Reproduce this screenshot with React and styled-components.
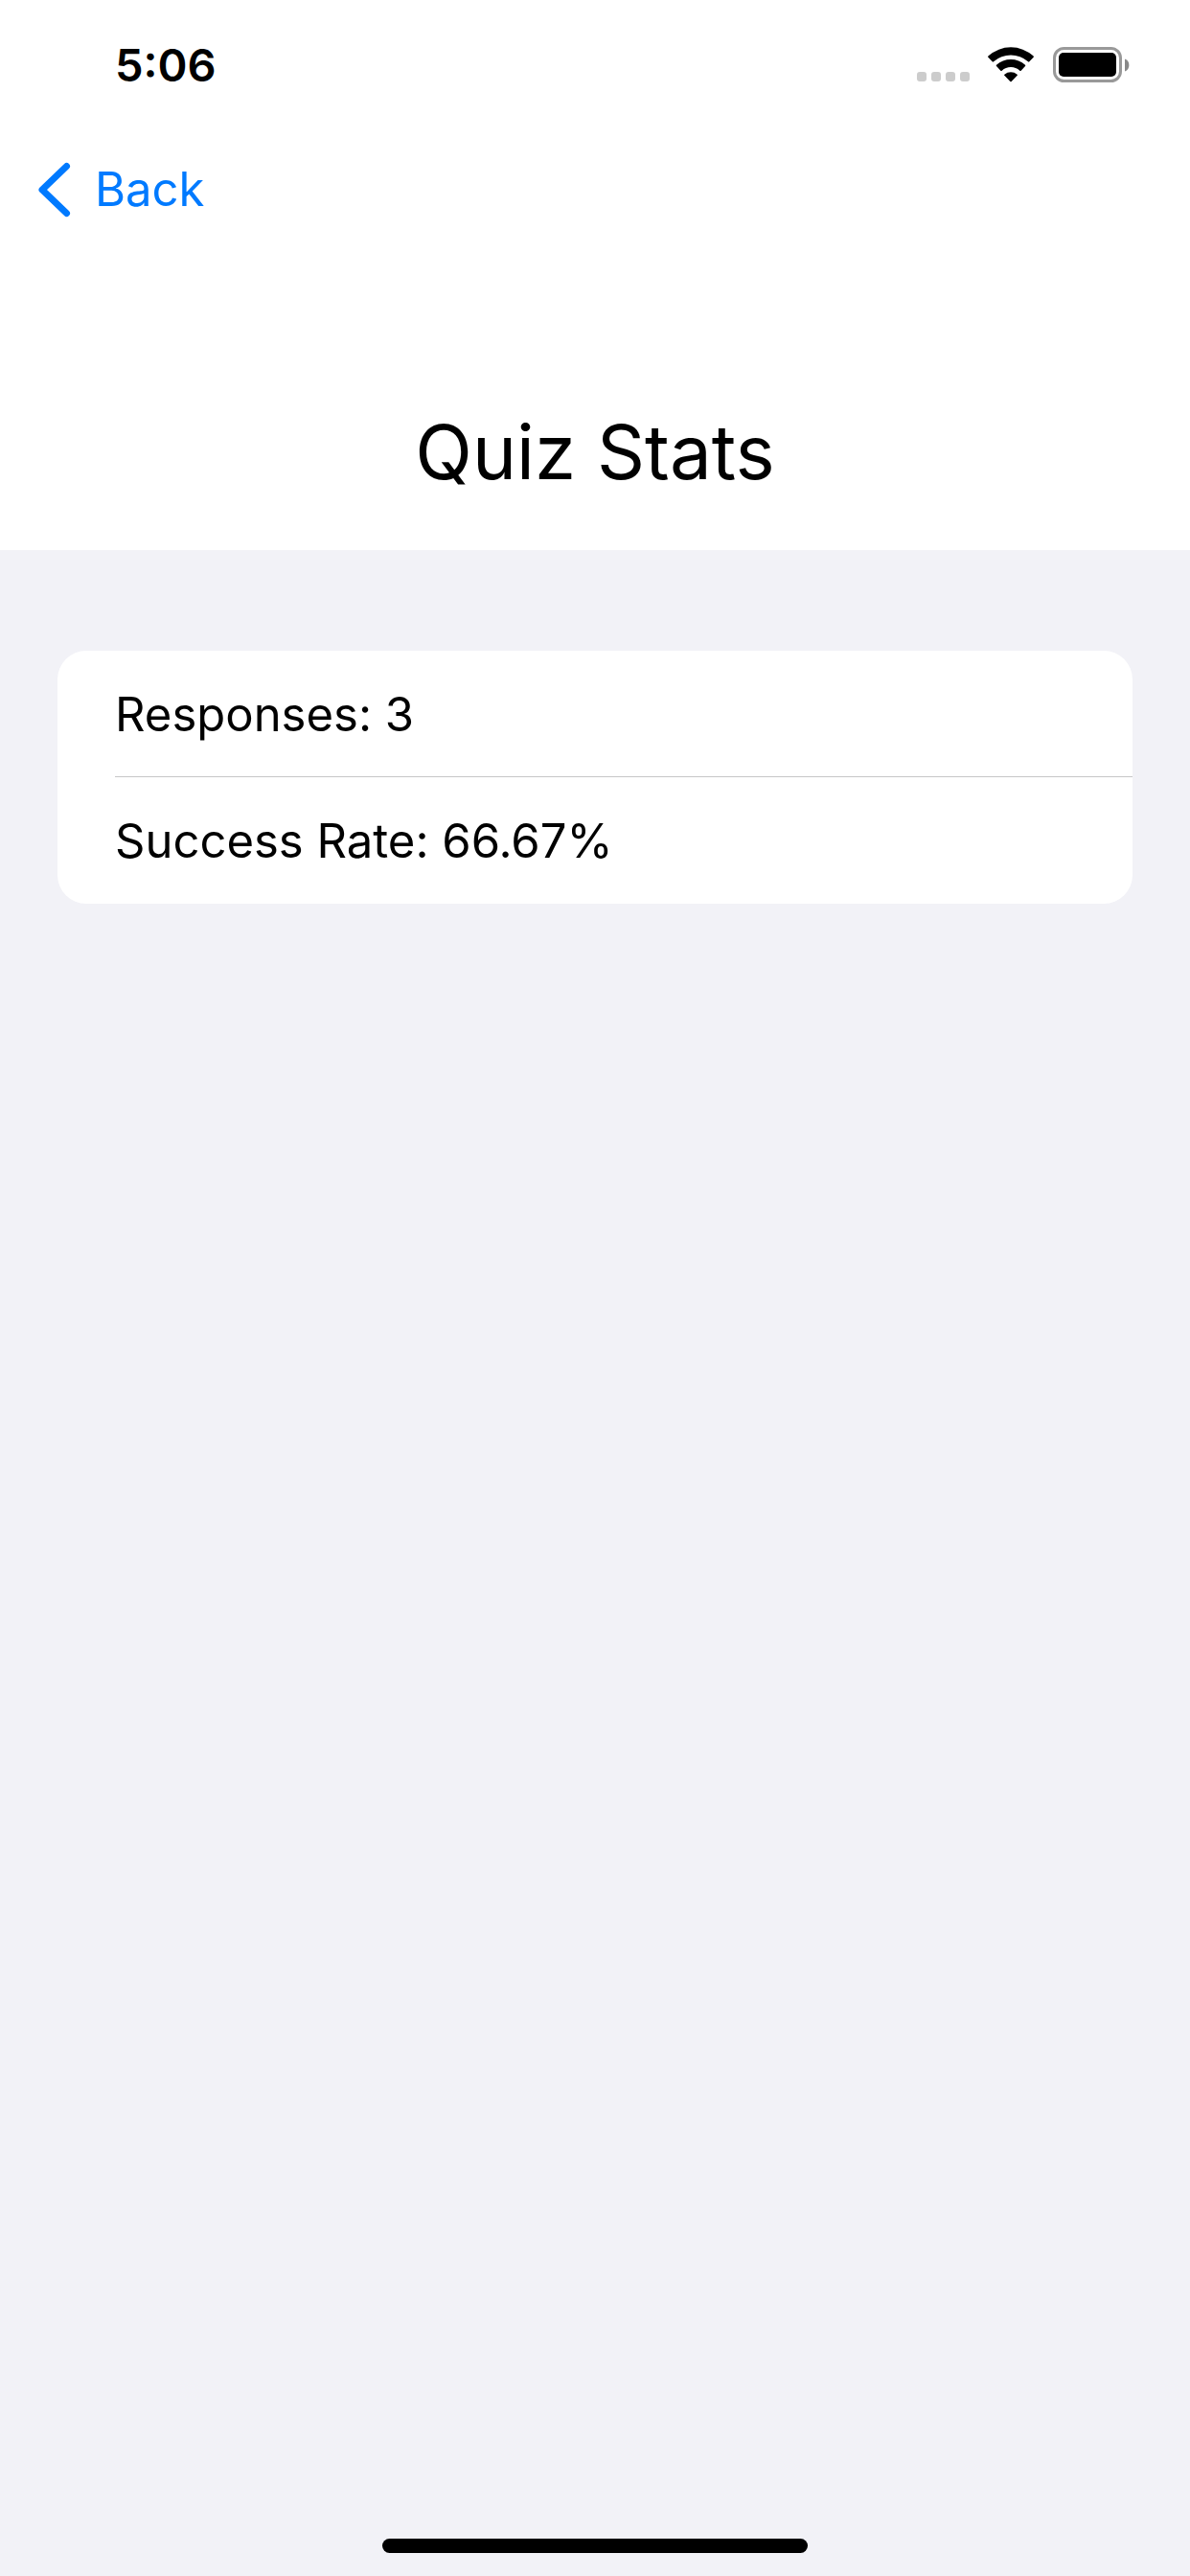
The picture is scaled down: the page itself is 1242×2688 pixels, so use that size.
import React from "react";
import styled, { createGlobalStyle } from "styled-components";

const GlobalStyle = createGlobalStyle`
  *, *::before, *::after { box-sizing: border-box; }
  body {
    margin: 0;
    background: #f2f2f7;
    color: #000;
    font-family: Inter, "Liberation Sans", sans-serif;
  }
`;

const Screen = styled.div`
  display: flex;
  flex-direction: column;
  min-height: 100vh;
  background: #f2f2f7;
`;

const Header = styled.header`
  background: #fff;
`;

const StatusBar = styled.div`
  display: flex;
  align-items: center;
  justify-content: space-between;
  height: 136px;
  padding: 0 63px 0 120px;
`;

const Time = styled.time`
  font-size: 47px;
  line-height: 60px;
  font-weight: 600;
`;

const StatusIcons = styled.div`
  display: flex;
  align-items: center;
`;

const SignalIcon = styled.svg`
  width: 56px;
  height: 38px;
  margin-right: 18px;
`;

const WifiIcon = styled.svg`
  width: 48px;
  height: 38px;
  margin-right: 20px;
`;

const BatteryIcon = styled.svg`
  width: 80px;
  height: 38px;
`;

const NavBar = styled.nav`
  display: flex;
  align-items: center;
  height: 124px;
  padding: 0 36px;
`;

const BackButton = styled.button`
  display: flex;
  align-items: center;
  gap: 21px;
  padding: 0;
  border: 0;
  background: none;
  color: #007aff;
  font: inherit;
  font-size: 49px;
  line-height: 64px;
  cursor: pointer;
`;

const Chevron = styled.svg`
  width: 42px;
  height: 60px;
`;

const Title = styled.h1`
  margin: 0;
  padding: 162px 60px 52px;
  font-size: 78px;
  line-height: 100px;
  font-weight: 400;
  text-align: center;
`;

const Main = styled.main`
  flex: 1;
  padding: 105px 60px;
`;

const Card = styled.ul`
  margin: 0;
  padding: 0 0 0 60px;
  list-style: none;
  background: #fff;
  border-radius: 30px;
`;

const Row = styled.li`
  padding: 35px 60px 32px 0;
  border-bottom: 1px solid #c6c6c8;
  font-size: 49px;
  line-height: 64px;

  &:last-child {
    border-bottom-color: transparent;
  }
`;

const HomeBar = styled.footer`
  display: flex;
  justify-content: center;
  padding-bottom: 24px;
`;

const HomeIndicator = styled.div`
  width: 444px;
  height: 15px;
  border-radius: 8px;
  background: #000;
`;

const stats = [
  { label: "Responses", value: "3" },
  { label: "Success Rate", value: "66.67%" },
];

export default function App() {
  return (
    <Screen>
      <GlobalStyle />
      <Header>
        <StatusBar>
          <Time>5:06</Time>
          <StatusIcons>
            <SignalIcon viewBox="0 0 56 38" fill="#ccc" aria-hidden="true">
              {[0, 15, 30, 45].map((x) => (
                <rect key={x} x={x} y="26" width="10" height="10" rx="3" />
              ))}
            </SignalIcon>
            <WifiIcon viewBox="0 0 144 114" aria-hidden="true">
              <path d="M1 32Q-1 30 2 28A104 104 0 0 1 142 28Q145 30 143 32L130 46Q128 48 126 46A82 82 0 0 0 18 46Q16 48 14 46Z" />
              <path d="M27 60Q25 58 27 56A67 67 0 0 1 117 56Q119 58 117 60L104 74Q102 76 100 74A42 42 0 0 0 44 74Q42 76 40 74Z" />
              <path d="M52 89Q50 87 52 86A31 31 0 0 1 92 86Q94 87 92 89L74 108Q72 110 70 108Z" />
            </WifiIcon>
            <BatteryIcon viewBox="0 0 80 38" aria-hidden="true">
              <rect x="1.5" y="1.5" width="69" height="34" rx="10" fill="none" stroke="#999" strokeWidth="3" />
              <rect x="6" y="6" width="60" height="25" rx="5" />
              <path d="M75 12.5a7 7 0 0 1 0 13z" fill="#888" />
            </BatteryIcon>
          </StatusIcons>
        </StatusBar>
        <NavBar>
          <BackButton type="button">
            <Chevron viewBox="0 0 42 60" fill="none" aria-hidden="true">
              <path d="M33.5 5.5L8 30L33.5 54.5" stroke="currentColor" strokeWidth="7" strokeLinecap="round" strokeLinejoin="round" />
            </Chevron>
            Back
          </BackButton>
        </NavBar>
        <Title>Quiz Stats</Title>
      </Header>
      <Main>
        <Card>
          {stats.map(({ label, value }) => (
            <Row key={label}>
              {label}: {value}
            </Row>
          ))}
        </Card>
      </Main>
      <HomeBar>
        <HomeIndicator />
      </HomeBar>
    </Screen>
  );
}
